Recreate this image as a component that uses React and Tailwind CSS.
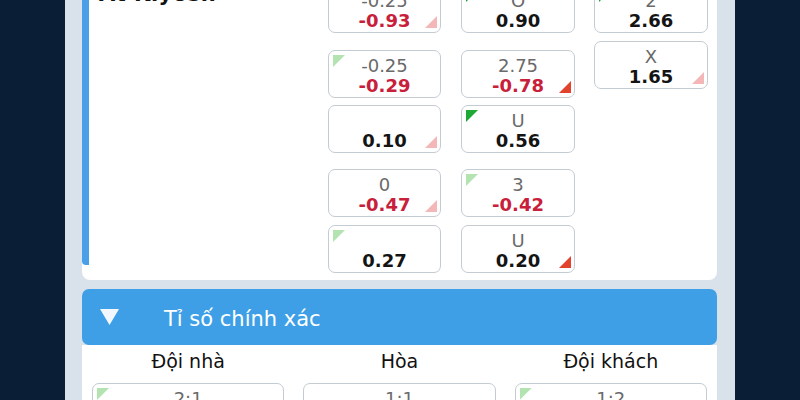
import clsx from 'clsx';

// Corner markers: green = price went up, red = price went down.
const TL = {
  strong: 'bg-[#1ea834]',
  soft: 'bg-[#b3e3b1]',
};
const BR = {
  strong: 'bg-[#e2432d]',
  soft: 'bg-[#f3b7b7]',
};

function Odd({ top, value, red, tl, br, className }) {
  return (
    <div
      className={clsx(
        'relative h-[48px] rounded-[7px] border border-[#c3cbd3] bg-white pt-[5px] text-center',
        className
      )}
    >
      {tl && (
        <span
          className={clsx(
            'absolute left-[4px] top-[4px] h-[12px] w-[12px] [clip-path:polygon(0_0,100%_0,0_100%)]',
            TL[tl]
          )}
        />
      )}
      {br && (
        <span
          className={clsx(
            'absolute bottom-[4px] right-[3px] h-[12px] w-[12px] [clip-path:polygon(100%_0,100%_100%,0_100%)]',
            BR[br]
          )}
        />
      )}
      <div className="h-[20px] text-[18px] leading-[20px] text-[#6a6a6a]">{top}</div>
      <div
        className={clsx(
          'text-[18px] font-bold leading-[20px]',
          red ? 'text-[#c8203a]' : 'text-[#141414]'
        )}
      >
        {value}
      </div>
    </div>
  );
}

export default function App() {
  return (
    <div className="h-[400px] w-[800px] overflow-hidden bg-[#0a1f36] font-['DejaVu_Sans',sans-serif]">
      <div className="mx-[65px] flex h-full flex-col bg-[#d9e2eb] pl-[17px] pr-[18px]">
        {/* market card (scrolled, top cut off) */}
        <div className="-mt-[16px] flex shrink-0 rounded-b-[8px] bg-white pb-[7px]">
          <div className="mb-[8px] w-[7px] rounded-bl-[4px] bg-[#4aa0e8]" />
          <div className="flex-1 pl-[10px]">
            <p className="text-[21px] font-bold leading-[20px] tracking-[0.5px] text-[#111]">At Kiyosh</p>
          </div>

          <div className="flex w-[113px] flex-col pt-[1px]">
            <Odd top="-0.25" value="-0.93" red br="soft" />
            <Odd top="-0.25" value="-0.29" red tl="soft" className="mt-[17px]" />
            <Odd top="" value="0.10" br="soft" className="mt-[7px]" />
            <Odd top="0" value="-0.47" red br="soft" className="mt-[16px]" />
            <Odd top="" value="0.27" tl="soft" className="mt-[8px]" />
          </div>

          <div className="ml-[20px] flex w-[114px] flex-col pt-[1px]">
            <Odd top="O" value="0.90" tl="strong" />
            <Odd top="2.75" value="-0.78" red br="strong" className="mt-[17px]" />
            <Odd top="U" value="0.56" tl="strong" className="mt-[7px]" />
            <Odd top="3" value="-0.42" red tl="soft" className="mt-[16px]" />
            <Odd top="U" value="0.20" br="strong" className="mt-[8px]" />
          </div>

          <div className="ml-[19px] mr-[9px] flex w-[114px] flex-col pt-[1px]">
            <Odd top="2" value="2.66" tl="strong" />
            <Odd top="X" value="1.65" br="soft" className="mt-[8px]" />
          </div>
        </div>

        {/* correct score */}
        <div className="mt-[9px] shrink-0">
          <div className="flex h-[56px] items-center rounded-[7px] bg-[#3e9fe7] pl-[17px]">
            <svg width="21" height="18" viewBox="0 0 21 18" className="shrink-0">
              <polygon points="1,1 20,1 10.5,17" fill="#f2f8fe" />
            </svg>
            <span className="ml-[44px] mt-[5px] text-[21px] leading-none text-white">Tỉ số chính xác</span>
          </div>
          <div className="grid grid-cols-3 gap-x-[19px] bg-white px-[10px] pt-[5px]">
            <div className="text-center text-[19px] leading-[22px] text-[#111]">Đội nhà</div>
            <div className="text-center text-[19px] leading-[22px] text-[#111]">Hòa</div>
            <div className="text-center text-[19px] leading-[22px] text-[#111]">Đội khách</div>
            <Odd top="2:1" value="" tl="soft" className="mt-[11px]" />
            <Odd top="1:1" value="" className="mt-[11px]" />
            <Odd top="1:2" value="" tl="soft" className="mt-[11px]" />
          </div>
        </div>
      </div>
    </div>
  );
}
